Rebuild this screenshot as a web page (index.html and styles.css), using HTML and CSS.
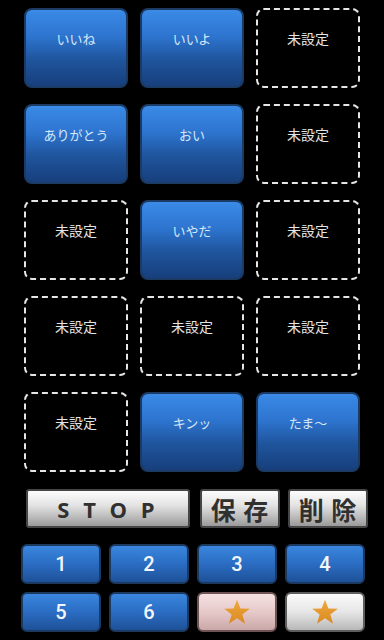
FILE: index.html
```html
<!DOCTYPE html>
<html lang="ja">
<head>
<meta charset="utf-8">
<link rel="stylesheet" href="styles.css">
</head>
<body>
<div class="screen">
  <div class="grid">
    <div class="btn blue">いいね</div>
    <div class="btn blue">いいよ</div>
    <div class="btn empty">未設定</div>
    <div class="btn blue">ありがとう</div>
    <div class="btn blue">おい</div>
    <div class="btn empty">未設定</div>
    <div class="btn empty">未設定</div>
    <div class="btn blue">いやだ</div>
    <div class="btn empty">未設定</div>
    <div class="btn empty">未設定</div>
    <div class="btn empty">未設定</div>
    <div class="btn empty">未設定</div>
    <div class="btn empty">未設定</div>
    <div class="btn blue">キンッ</div>
    <div class="btn blue">たま～</div>
  </div>
  <div class="controls">
    <div class="cbtn stop">S T O P</div>
    <div class="cbtn kanji">保 存</div>
    <div class="cbtn kanji">削 除</div>
  </div>
  <div class="pages">
    <div class="pbtn num">1</div>
    <div class="pbtn num">2</div>
    <div class="pbtn num">3</div>
    <div class="pbtn num">4</div>
    <div class="pbtn num">5</div>
    <div class="pbtn num">6</div>
    <div class="pbtn star pink"><svg viewBox="0 0 24 24" width="28" height="28"><defs><linearGradient id="sg1" x1="0" y1="0" x2="0" y2="1"><stop offset="0" stop-color="#f0a840"/><stop offset="1" stop-color="#d88a20"/></linearGradient></defs><polygon points="12,1.5 14.9,9 23,9.2 16.6,14.2 18.9,22 12,17.4 5.1,22 7.4,14.2 1,9.2 9.1,9" fill="url(#sg1)"/></svg></div>
    <div class="pbtn star white"><svg viewBox="0 0 24 24" width="28" height="28"><defs><linearGradient id="sg2" x1="0" y1="0" x2="0" y2="1"><stop offset="0" stop-color="#f0a840"/><stop offset="1" stop-color="#d88a20"/></linearGradient></defs><polygon points="12,1.5 14.9,9 23,9.2 16.6,14.2 18.9,22 12,17.4 5.1,22 7.4,14.2 1,9.2 9.1,9" fill="url(#sg2)"/></svg></div>
  </div>
</div>
</body>
</html>
```
FILE: styles.css
```css
html, body {
  margin: 0;
  padding: 0;
  background: #000;
}
body {
  width: 384px;
  height: 640px;
  overflow: hidden;
  font-family: "Noto Sans CJK JP", "Noto Sans", sans-serif;
}
.screen {
  display: flex;
  flex-direction: column;
  padding-top: 8px;
}
.grid {
  display: grid;
  grid-template-columns: repeat(3, 104px);
  grid-auto-rows: 80px;
  column-gap: 12px;
  row-gap: 16px;
  padding-left: 24px;
}
.btn {
  box-sizing: border-box;
  border-radius: 8px;
  display: flex;
  justify-content: center;
  padding-top: 20px;
  font-size: 13px;
  line-height: 18px;
}
.blue {
  background: linear-gradient(to bottom, #3a8ae6 0%, #2d74cf 35%, #1f559d 65%, #173f7c 100%);
  border: 2px solid #1c3b64;
  color: #d6e8f8;
}
.empty {
  border: 2px dashed #e6e6e6;
  color: #e4e4e4;
  font-size: 14px;
  padding-top: 19px;
}
.controls {
  display: flex;
  margin-top: 17px;
  padding-left: 26px;
  height: 39px;
}
.cbtn {
  box-sizing: border-box;
  height: 39px;
  border: 2px solid #454545;
  border-radius: 3px;
  background: linear-gradient(to bottom, #fcfcfc 0%, #e4e4e4 40%, #b4b4b4 80%, #9a9a9a 100%);
  color: #303030;
  display: flex;
  align-items: center;
  justify-content: center;
  font-weight: bold;
}
.stop {
  width: 164px;
  font-family: "Open Sans", "DejaVu Sans", sans-serif;
  font-size: 22px;
  letter-spacing: 4px;
  margin-right: 10px;
}
.kanji {
  width: 80px;
  font-size: 25px;
  letter-spacing: 1px;
  margin-right: 8px;
}
.pages {
  display: grid;
  grid-template-columns: repeat(4, 80px);
  grid-auto-rows: 40px;
  column-gap: 8px;
  row-gap: 8px;
  margin-top: 16px;
  padding-left: 21px;
}
.pbtn {
  box-sizing: border-box;
  border-radius: 6px;
  display: flex;
  align-items: center;
  justify-content: center;
}
.num {
  background: linear-gradient(to bottom, #3a86de 0%, #2c6fc6 45%, #1e5198 100%);
  border: 2px solid #1c3a60;
  color: #f2f6fb;
  font-family: Roboto, "Noto Sans", sans-serif;
  font-weight: 500;
  font-size: 20px;
}
.pink {
  background: linear-gradient(to bottom, #f6e2e2 0%, #e4c6c6 55%, #c9a7a7 100%);
  border: 2px solid #6e5454;
}
.white {
  background: linear-gradient(to bottom, #fbfbfb 0%, #e6e6e6 50%, #b8b8b8 100%);
  border: 2px solid #5e5e5e;
}
```
